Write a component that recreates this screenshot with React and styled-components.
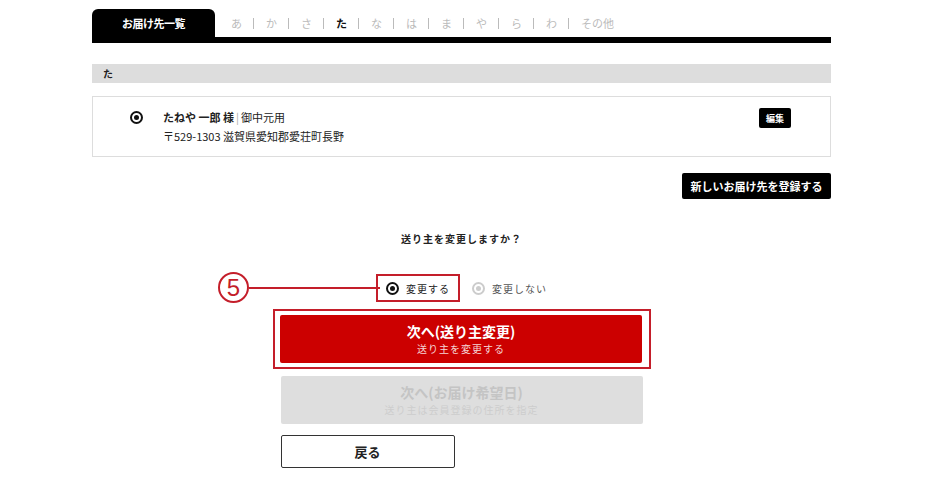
import React from 'react';
import styled, { createGlobalStyle } from 'styled-components';

const Global = createGlobalStyle`
  body {
    margin: 0;
    background: #fff;
    font-family: "Noto Sans CJK JP", "Noto Sans", sans-serif;
    color: #222;
  }
`;

const Page = styled.div`
  width: 739px;
  margin-left: 92px;
  padding-top: 9px;
`;

const TabBar = styled.div`
  display: flex;
  align-items: center;
  border-bottom: 6px solid #000;
  height: 28px;
`;

const ActiveTab = styled.div`
  width: 123px;
  height: 28px;
  background: #000;
  color: #fff;
  border-radius: 6px 6px 0 0;
  font-size: 11px;
  font-weight: 700;
  display: flex;
  align-items: center;
  justify-content: center;
  letter-spacing: -0.5px;
`;

const Kana = styled.div`
  display: flex;
  align-items: center;
  margin-left: 16px;
  font-size: 11px;
`;

const KanaItem = styled.span`
  color: ${p => (p.$on ? '#111' : '#bbb')};
  font-weight: ${p => (p.$on ? 700 : 400)};
`;

const Sep = styled.span`
  width: 1px;
  height: 11px;
  background: #bbb;
  margin: 0 12px 0 11px;
`;

const SectionHead = styled.div`
  margin-top: 21px;
  height: 19px;
  background: #ddd;
  font-size: 10px;
  font-weight: 700;
  padding-left: 11px;
  display: flex;
  align-items: center;
`;

const Card = styled.div`
  margin-top: 13px;
  height: 61px;
  border: 1px solid #ddd;
  box-sizing: border-box;
  display: flex;
  align-items: flex-start;
  padding: 11px 39px 0 37px;
`;

const Radio = styled.span`
  width: 13px;
  height: 13px;
  box-sizing: border-box;
  border-radius: 50%;
  border: 2px solid ${p => (p.$off ? '#ccc' : '#111')};
  display: inline-flex;
  align-items: center;
  justify-content: center;
  flex-shrink: 0;
  &::after {
    content: '';
    width: 5px;
    height: 5px;
    border-radius: 50%;
    background: ${p => (p.$off ? '#ccc' : '#111')};
  }
`;

const CardRadio = styled.div`
  height: 19px;
  display: flex;
  align-items: center;
`;

const Info = styled.div`
  margin-left: 20px;
  flex: 1;
  font-size: 11px;
  line-height: 19px;
  color: #222;
`;

const Name = styled.b`
  font-weight: 700;
`;

const Bar = styled.span`
  color: #aaa;
  margin: 0 2px;
`;

const EditBtn = styled.div`
  width: 32px;
  height: 20px;
  background: #000;
  color: #fff;
  border-radius: 2px;
  font-size: 9px;
  font-weight: 700;
  display: flex;
  align-items: center;
  justify-content: center;
`;

const NewRow = styled.div`
  display: flex;
  justify-content: flex-end;
  margin-top: 16px;
`;

const NewBtn = styled.div`
  width: 149px;
  height: 26px;
  background: #000;
  color: #fff;
  border-radius: 2px;
  font-size: 11px;
  font-weight: 700;
  display: flex;
  align-items: center;
  justify-content: center;
`;

const Question = styled.div`
  margin-top: 32px;
  text-align: center;
  font-size: 10px;
  font-weight: 700;
  letter-spacing: 1px;
`;

const Choices = styled.div`
  position: relative;
  margin-top: 28px;
  display: flex;
  justify-content: center;
  align-items: center;
  gap: 2px;
  height: 28px;
  padding-left: 10px;
`;

const Choice = styled.label`
  display: flex;
  align-items: center;
  gap: 7px;
  height: 28px;
  box-sizing: border-box;
  padding: 0 8px;
  font-size: 10px;
  letter-spacing: 1px;
  color: ${p => (p.$off ? '#555' : '#222')};
  border: 2.5px solid ${p => (p.$marked ? '#c41e2a' : 'transparent')};
`;

const Callout = styled.div`
  position: absolute;
  left: 126px;
  top: -2px;
  display: flex;
  align-items: center;
`;

const Num = styled.div`
  width: 31px;
  height: 31px;
  box-sizing: border-box;
  border: 2px solid #c41e2a;
  border-radius: 50%;
  color: #c41e2a;
  font-family: "Liberation Sans", Arial, sans-serif;
  font-size: 24px;
  display: flex;
  align-items: center;
  justify-content: center;
  line-height: 1;
`;

const Line = styled.div`
  width: 131px;
  height: 2px;
  background: #c41e2a;
`;

const Actions = styled.div`
  width: 378px;
  margin: 7px auto 0;
  display: flex;
  flex-direction: column;
  align-items: flex-start;
`;

const Marked = styled.div`
  width: 378px;
  height: 60px;
  box-sizing: border-box;
  border: 2.5px solid #c41e2a;
  padding: 4px 5.5px;
`;

const BigBtn = styled.div`
  width: 362px;
  height: 48px;
  margin: ${p => (p.$gray ? '7px 0 0 8px' : '0')};
  background: ${p => (p.$gray ? '#dedede' : '#cc0000')};
  color: ${p => (p.$gray ? '#c4c4c4' : '#fff')};
  border-radius: 2px;
  display: flex;
  flex-direction: column;
  align-items: center;
  justify-content: center;
`;

const BtnTitle = styled.div`
  font-size: 14px;
  font-weight: 700;
  line-height: 19px;
`;

const BtnSub = styled.div`
  font-size: 10px;
  letter-spacing: 1px;
  line-height: 15px;
  color: ${p => (p.$gray ? '#cdcdcd' : '#f5d5d5')};
`;

const BackBtn = styled.div`
  margin: 11px 0 0 8px;
  width: 174px;
  height: 33px;
  box-sizing: border-box;
  border: 1px solid #333;
  border-radius: 2px;
  font-size: 13px;
  font-weight: 700;
  display: flex;
  align-items: center;
  justify-content: center;
`;

const kana = ['あ', 'か', 'さ', 'た', 'な', 'は', 'ま', 'や', 'ら', 'わ', 'その他'];

export default function App() {
  return (
    <>
      <Global />
      <Page>
        <TabBar>
          <ActiveTab>お届け先一覧</ActiveTab>
          <Kana>
            {kana.map((k, i) => (
              <React.Fragment key={k}>
                {i > 0 && <Sep />}
                <KanaItem $on={k === 'た'}>{k}</KanaItem>
              </React.Fragment>
            ))}
          </Kana>
        </TabBar>

        <SectionHead>た</SectionHead>

        <Card>
          <CardRadio><Radio /></CardRadio>
          <Info>
            <div><Name>たねや 一郎 様</Name><Bar>|</Bar>御中元用</div>
            <div>〒529-1303 滋賀県愛知郡愛荘町長野</div>
          </Info>
          <EditBtn>編集</EditBtn>
        </Card>

        <NewRow>
          <NewBtn>新しいお届け先を登録する</NewBtn>
        </NewRow>

        <Question>送り主を変更しますか？</Question>

        <Choices>
          <Callout>
            <Num>5</Num>
            <Line />
          </Callout>
          <Choice $marked><Radio />変更する</Choice>
          <Choice $off><Radio $off />変更しない</Choice>
        </Choices>

        <Actions>
          <Marked>
            <BigBtn>
              <BtnTitle>次へ(送り主変更)</BtnTitle>
              <BtnSub>送り主を変更する</BtnSub>
            </BigBtn>
          </Marked>
          <BigBtn $gray>
            <BtnTitle>次へ(お届け希望日)</BtnTitle>
            <BtnSub $gray>送り主は会員登録の住所を指定</BtnSub>
          </BigBtn>
          <BackBtn>戻る</BackBtn>
        </Actions>
      </Page>
    </>
  );
}
